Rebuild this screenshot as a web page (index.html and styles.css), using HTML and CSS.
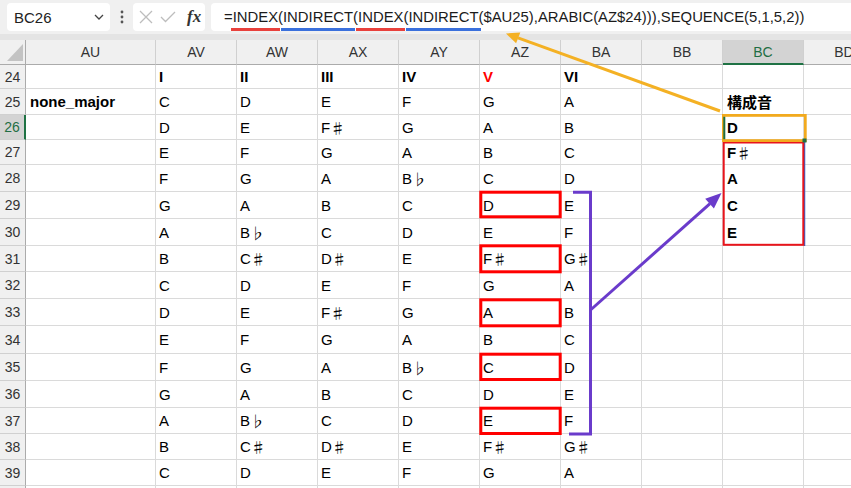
FILE: index.html
```html
<!DOCTYPE html>
<html lang="ja">
<head>
<meta charset="utf-8">
<title>Excel</title>
<link rel="stylesheet" href="styles.css">
</head>
<body>
<div class="toolbar">
  <div class="namebox"><span>BC26</span><svg class="chev" width="10" height="6" viewBox="0 0 10 6"><path d="M1 1 L5 5 L9 1" fill="none" stroke="#444" stroke-width="1.3"/></svg></div>
  <div class="dots"><svg width="4" height="14" viewBox="0 0 4 14"><circle cx="2" cy="2" r="1.4" fill="#555"/><circle cx="2" cy="7" r="1.4" fill="#555"/><circle cx="2" cy="12" r="1.4" fill="#555"/></svg></div>
  <div class="fxbox">
    <svg width="14" height="14" viewBox="0 0 14 14"><path d="M1 1 L13 13 M13 1 L1 13" stroke="#bdbdbd" stroke-width="1.3" fill="none"/></svg>
    <svg class="check" width="16" height="12" viewBox="0 0 16 12"><path d="M1 6 L5.5 10.5 L15 1" stroke="#bdbdbd" stroke-width="1.3" fill="none"/></svg>
    <span class="fx">fx</span>
  </div>
  <div class="formula">=<span class="ul red">INDEX</span>(<span class="ul blue">INDIRECT</span>(<span class="ul red">INDEX</span>(<span class="ul blue">INDIRECT</span>($AU25),ARABIC(AZ$24))),SEQUENCE(5,1,5,2))</div>
</div>
<div class="strip"></div>
<div class="sheet">
  <div class="corner"><svg width="26" height="24" viewBox="0 0 26 24"><polygon points="23,4 23,21 7,21" fill="#c3c3c3"/></svg></div>
  <div class="ch">AU</div><div class="ch">AV</div><div class="ch">AW</div><div class="ch">AX</div><div class="ch">AY</div><div class="ch">AZ</div><div class="ch">BA</div><div class="ch">BB</div><div class="ch sel">BC</div><div class="ch">BD</div>

  <div class="rh">24</div><div class="c"></div><div class="c b">I</div><div class="c b">II</div><div class="c b">III</div><div class="c b">IV</div><div class="c b v">V</div><div class="c b">VI</div><div class="c"></div><div class="c"></div><div class="c"></div>
  <div class="rh">25</div><div class="c b key">none_major</div><div class="c">C</div><div class="c">D</div><div class="c">E</div><div class="c">F</div><div class="c">G</div><div class="c">A</div><div class="c"></div><div class="c b out">構成音</div><div class="c"></div>
  <div class="rh sel">26</div><div class="c"></div><div class="c">D</div><div class="c">E</div><div class="c">F<span class="acc">♯</span></div><div class="c">G</div><div class="c">A</div><div class="c">B</div><div class="c"></div><div class="c b out">D</div><div class="c"></div>
  <div class="rh">27</div><div class="c"></div><div class="c">E</div><div class="c">F</div><div class="c">G</div><div class="c">A</div><div class="c">B</div><div class="c">C</div><div class="c"></div><div class="c b out">F<span class="acc">♯</span></div><div class="c"></div>
  <div class="rh">28</div><div class="c"></div><div class="c">F</div><div class="c">G</div><div class="c">A</div><div class="c">B<span class="acc">♭</span></div><div class="c">C</div><div class="c">D</div><div class="c"></div><div class="c b out">A</div><div class="c"></div>
  <div class="rh">29</div><div class="c"></div><div class="c">G</div><div class="c">A</div><div class="c">B</div><div class="c">C</div><div class="c">D</div><div class="c">E</div><div class="c"></div><div class="c b out">C</div><div class="c"></div>
  <div class="rh">30</div><div class="c"></div><div class="c">A</div><div class="c">B<span class="acc">♭</span></div><div class="c">C</div><div class="c">D</div><div class="c">E</div><div class="c">F</div><div class="c"></div><div class="c b out">E</div><div class="c"></div>
  <div class="rh">31</div><div class="c"></div><div class="c">B</div><div class="c">C<span class="acc">♯</span></div><div class="c">D<span class="acc">♯</span></div><div class="c">E</div><div class="c">F<span class="acc">♯</span></div><div class="c">G<span class="acc">♯</span></div><div class="c"></div><div class="c"></div><div class="c"></div>
  <div class="rh">32</div><div class="c"></div><div class="c">C</div><div class="c">D</div><div class="c">E</div><div class="c">F</div><div class="c">G</div><div class="c">A</div><div class="c"></div><div class="c"></div><div class="c"></div>
  <div class="rh">33</div><div class="c"></div><div class="c">D</div><div class="c">E</div><div class="c">F<span class="acc">♯</span></div><div class="c">G</div><div class="c">A</div><div class="c">B</div><div class="c"></div><div class="c"></div><div class="c"></div>
  <div class="rh">34</div><div class="c"></div><div class="c">E</div><div class="c">F</div><div class="c">G</div><div class="c">A</div><div class="c">B</div><div class="c">C</div><div class="c"></div><div class="c"></div><div class="c"></div>
  <div class="rh">35</div><div class="c"></div><div class="c">F</div><div class="c">G</div><div class="c">A</div><div class="c">B<span class="acc">♭</span></div><div class="c">C</div><div class="c">D</div><div class="c"></div><div class="c"></div><div class="c"></div>
  <div class="rh">36</div><div class="c"></div><div class="c">G</div><div class="c">A</div><div class="c">B</div><div class="c">C</div><div class="c">D</div><div class="c">E</div><div class="c"></div><div class="c"></div><div class="c"></div>
  <div class="rh">37</div><div class="c"></div><div class="c">A</div><div class="c">B<span class="acc">♭</span></div><div class="c">C</div><div class="c">D</div><div class="c">E</div><div class="c">F</div><div class="c"></div><div class="c"></div><div class="c"></div>
  <div class="rh">38</div><div class="c"></div><div class="c">B</div><div class="c">C<span class="acc">♯</span></div><div class="c">D<span class="acc">♯</span></div><div class="c">E</div><div class="c">F<span class="acc">♯</span></div><div class="c">G<span class="acc">♯</span></div><div class="c"></div><div class="c"></div><div class="c"></div>
  <div class="rh">39</div><div class="c"></div><div class="c">C</div><div class="c">D</div><div class="c">E</div><div class="c">F</div><div class="c">G</div><div class="c">A</div><div class="c"></div><div class="c"></div><div class="c"></div>
  <div class="rh"></div><div class="c"></div><div class="c"></div><div class="c"></div><div class="c"></div><div class="c"></div><div class="c"></div><div class="c"></div><div class="c"></div><div class="c"></div><div class="c"></div>
</div>

<svg class="annot" width="851" height="488" viewBox="0 0 851 488">
  <g fill="none" stroke="#ff0000" stroke-width="3">
    <rect x="480.8" y="192.2" width="79.4" height="24.6"/>
    <rect x="480.8" y="245.8" width="79.4" height="26"/>
    <rect x="480.8" y="299.8" width="79.4" height="26"/>
    <rect x="480.8" y="354.2" width="79.4" height="25.3"/>
    <rect x="480.8" y="408.2" width="79.4" height="25.3"/>
  </g>
  <line x1="804.5" y1="141" x2="804.5" y2="246" stroke="#2f66d0" stroke-width="1.5"/>
  <rect x="723.7" y="142.5" width="79.6" height="102.3" fill="none" stroke="#e8141c" stroke-width="2"/>
  <rect x="723.4" y="115.4" width="81.9" height="25.2" fill="none" stroke="#f2aa1e" stroke-width="2.8"/>
  <rect x="723.3" y="116.8" width="2" height="22.4" fill="#1f6e43"/>
  <rect x="802.5" y="138.5" width="4" height="4" fill="#1f6e43"/>
  <line x1="720" y1="111" x2="518" y2="37.9" stroke="#f4b124" stroke-width="3"/>
  <polygon points="506,33.5 520.3,32.5 516.1,43.3" fill="#f4b124"/>
  <polyline points="573,192.3 590.5,192.3 590.5,434 569,434" fill="none" stroke="#6a3bcb" stroke-width="3"/>
  <line x1="590.5" y1="310" x2="710" y2="203.6" stroke="#6a3bcb" stroke-width="3"/>
  <polygon points="721.5,193 713.9,208.5 705.2,198.8" fill="#6a3bcb"/>
</svg>
</body>
</html>
```

FILE: styles.css
```css
* {
  box-sizing: border-box;
}

html,
body {
  margin: 0;
  padding: 0;
}

body {
  width: 851px;
  height: 488px;
  overflow: hidden;
  position: relative;
  background: #ffffff;
  font-family: "Liberation Sans", "Noto Sans CJK JP", sans-serif;
}

.toolbar {
  height: 34px;
  background: #f0f0f0;
  display: flex;
  align-items: flex-start;
  padding-top: 3px;
}

.namebox {
  margin-left: 7px;
  width: 103px;
  height: 28px;
  background: #ffffff;
  border-radius: 4px;
  display: flex;
  align-items: center;
  justify-content: space-between;
  padding: 0 6px 0 7px;
  font-size: 15px;
  color: #222222;
}

.chev {
  display: block;
}

.dots {
  width: 23px;
  height: 28px;
  display: flex;
  align-items: center;
  justify-content: center;
}

.fxbox {
  width: 72px;
  height: 28px;
  background: #ffffff;
  border-radius: 4px;
  display: flex;
  align-items: center;
  padding-left: 6px;
  gap: 7px;
}

.fxbox svg {
  display: block;
}

.fx {
  font-family: "Liberation Serif", serif;
  font-style: italic;
  font-weight: bold;
  font-size: 17px;
  color: #333333;
  margin-left: 4px;
}

.formula {
  flex: 1;
  margin-left: 6px;
  height: 28px;
  background: #ffffff;
  border-radius: 4px 0 0 4px;
  padding-left: 13px;
  font-size: 14.85px;
  line-height: 28px;
  white-space: nowrap;
  overflow: hidden;
  color: #1b1b1b;
}

.ul {
  padding: 0 2px 3px;
  margin: 0 -2px;
  border-bottom: 3px solid;
}

.ul.red {
  border-bottom-color: #e8413c;
}

.ul.blue {
  border-bottom-color: #3a70dc;
}

.strip {
  height: 6px;
  background: #e4e4e4;
}

.sheet {
  display: grid;
  width: max-content;
  grid-template-columns: 26px 130px repeat(8, 81px) 81px;
  grid-template-rows: 25px 24px 26px 25px 25px 27px 27px 27px 26px 27px 27px 28px 27px 27px 26px 26px 26px 27px;
}

.corner {
  background: #f0f0f0;
  border-right: 1px solid #ababab;
  border-bottom: 1px solid #ababab;
}

.corner svg {
  display: block;
}

.ch {
  background: #f0f0f0;
  border-right: 1px solid #d0d0d0;
  border-bottom: 1px solid #ababab;
  display: flex;
  align-items: center;
  justify-content: center;
  font-size: 14px;
  color: #333333;
}

.ch.sel {
  background: #d3d3d3;
  color: #1f6e43;
  border-bottom: 2px solid #1f7244;
}

.rh {
  background: #f0f0f0;
  border-right: 1px solid #ababab;
  border-bottom: 1px solid #d0d0d0;
  display: flex;
  align-items: center;
  justify-content: center;
  font-size: 14px;
  color: #333333;
}

.rh.sel {
  background: #d3d3d3;
  color: #1f6e43;
  border-right: 2px solid #1f7244;
}

.c {
  border-right: 1px solid #dadada;
  border-bottom: 1px solid #dadada;
  display: flex;
  align-items: center;
  padding-left: 3px;
  font-size: 15px;
  color: #000000;
  white-space: nowrap;
}

.c.b {
  font-weight: bold;
}

.c.key {
  padding-left: 4px;
}

.c.out {
  padding-left: 4px;
}

.c.v {
  color: #ff0000;
}

.acc {
  display: inline-block;
  width: 15px;
  text-align: center;
  font-family: "Noto Sans CJK JP", sans-serif;
  font-weight: normal;
}

.annot {
  position: absolute;
  top: 0;
  left: 0;
  pointer-events: none;
}
```
